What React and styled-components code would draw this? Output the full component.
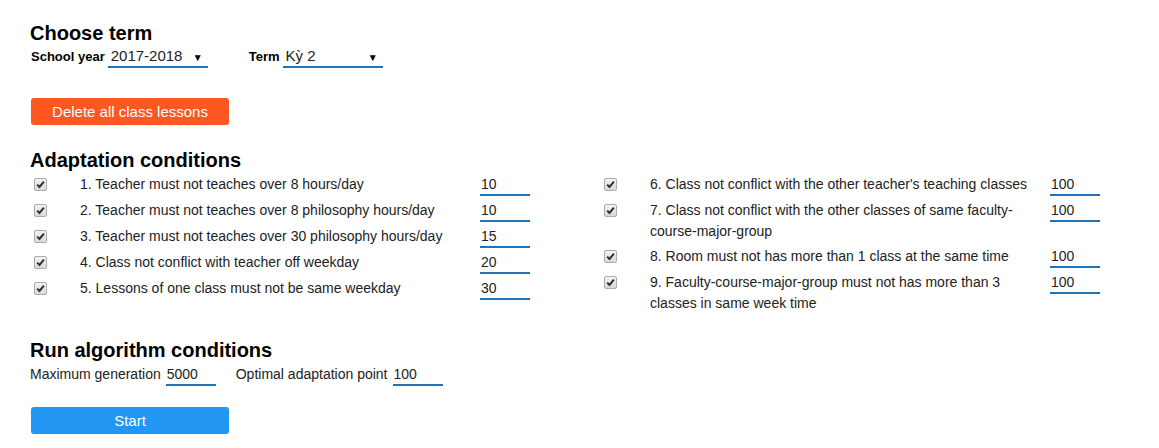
import React from "react";
import styled, { createGlobalStyle } from "styled-components";

const Global = createGlobalStyle`
  html, body { margin: 0; padding: 0; background: #fff; }
  body { font-family: "Liberation Sans", Arial, sans-serif; color: #222; }
  * { box-sizing: border-box; }
`;

const Page = styled.div`
  padding: 22px 30px 0 30px;
  width: 1159px;
  height: 448px;
`;

const Heading = styled.h2`
  margin: ${(p) => p.$mt || 0}px 0 0 0;
  font-size: 20px;
  line-height: 23px;
  font-weight: bold;
  color: #000;
`;

const Inline = styled.div`
  display: flex;
  align-items: baseline;
  margin-top: ${(p) => p.$mt || 0}px;
`;

const BoldLabel = styled.span`
  font-size: 13px;
  font-weight: bold;
  color: #000;
  margin-left: ${(p) => p.$ml || 0}px;
  padding-left: ${(p) => (p.$ml ? 0 : 1)}px;
  margin-right: 3px;
`;

const Label = styled.span`
  font-size: 14px;
  color: #222;
  margin-left: ${(p) => p.$ml || 0}px;
  margin-right: 5px;
`;

const SelectBox = styled.div`
  width: 100px;
  height: 22px;
  display: flex;
  align-items: baseline;
  justify-content: space-between;
  padding: 0 5px 0 3px;
  border-bottom: 2px solid #1f73b7;
  font-size: 15px;
  line-height: 20px;
  color: #222;
`;

const Arrow = styled.span`
  font-size: 10px;
  color: #000;
`;

const Button = styled.button`
  display: block;
  margin: ${(p) => p.$mt}px 0 0 1px;
  width: 198px;
  height: 27px;
  border: none;
  border-radius: 3px;
  background: ${(p) => p.$bg};
  color: #fff;
  font-family: "Liberation Sans", Arial, sans-serif;
  font-size: 15px;
  padding: 0;
`;

const Conditions = styled.div`
  display: grid;
  grid-template-columns: 500px 500px;
  column-gap: 70px;
  margin-top: 2px;
  align-items: start;
`;

const Column = styled.div`
  display: flex;
  flex-direction: column;
`;

const Row = styled.div`
  display: grid;
  grid-template-columns: 50px 400px 50px;
  align-items: start;
  padding-bottom: 4px;
`;

const Check = styled.span`
  width: 13px;
  height: 13px;
  margin: 4px 0 0 4px;
  border: 1px solid #ababab;
  border-radius: 2px;
  background: linear-gradient(#f2f2f2, #dadada);
  display: flex;
  align-items: center;
  justify-content: center;
`;

const RowText = styled.span`
  font-size: 14px;
  line-height: 21px;
  padding-right: 10px;
  color: #222;
`;

const NumInput = styled.div`
  width: 50px;
  height: 22px;
  border-bottom: 2px solid #1f73b7;
  font-size: 14px;
  line-height: 19px;
  padding: 1px 0 0 1px;
  color: #222;
`;

const CheckMark = () => (
  <svg width="9" height="9" viewBox="0 0 9 9">
    <path d="M1.2 4.6 L3.5 7 L7.9 1.6" fill="none" stroke="#2f2f2f" strokeWidth="2" />
  </svg>
);

const left = [
  ["1. Teacher must not teaches over 8 hours/day", "10"],
  ["2. Teacher must not teaches over 8 philosophy hours/day", "10"],
  ["3. Teacher must not teaches over 30 philosophy hours/day", "15"],
  ["4. Class not conflict with teacher off weekday", "20"],
  ["5. Lessons of one class must not be same weekday", "30"],
];
const right = [
  ["6. Class not conflict with the other teacher's teaching classes", "100"],
  ["7. Class not conflict with the other classes of same faculty-course-major-group", "100"],
  ["8. Room must not has more than 1 class at the same time", "100"],
  ["9. Faculty-course-major-group must not has more than 3 classes in same week time", "100"],
];

const CondRow = ({ text, value }) => (
  <Row>
    <Check><CheckMark /></Check>
    <RowText>{text}</RowText>
    <NumInput>{value}</NumInput>
  </Row>
);

export default function App() {
  return (
    <Page>
      <Global />
      <Heading>Choose term</Heading>
      <Inline $mt={1}>
        <BoldLabel>School year</BoldLabel>
        <SelectBox>
          <span>2017-2018</span>
          <Arrow>▼</Arrow>
        </SelectBox>
        <BoldLabel $ml={41}>Term</BoldLabel>
        <SelectBox>
          <span>Kỳ 2</span>
          <Arrow>▼</Arrow>
        </SelectBox>
      </Inline>
      <Button $mt={30} $bg="#ff5722">Delete all class lessons</Button>
      <Heading $mt={24}>Adaptation conditions</Heading>
      <Conditions>
        <Column>
          {left.map(([t, v]) => <CondRow key={t} text={t} value={v} />)}
        </Column>
        <Column>
          {right.map(([t, v]) => <CondRow key={t} text={t} value={v} />)}
        </Column>
      </Conditions>
      <Heading $mt={21}>Run algorithm conditions</Heading>
      <Inline $mt={2}>
        <Label>Maximum generation</Label>
        <NumInput>5000</NumInput>
        <Label $ml={20}>Optimal adaptation point</Label>
        <NumInput>100</NumInput>
      </Inline>
      <Button $mt={21} $bg="#2196f3">Start</Button>
    </Page>
  );
}
